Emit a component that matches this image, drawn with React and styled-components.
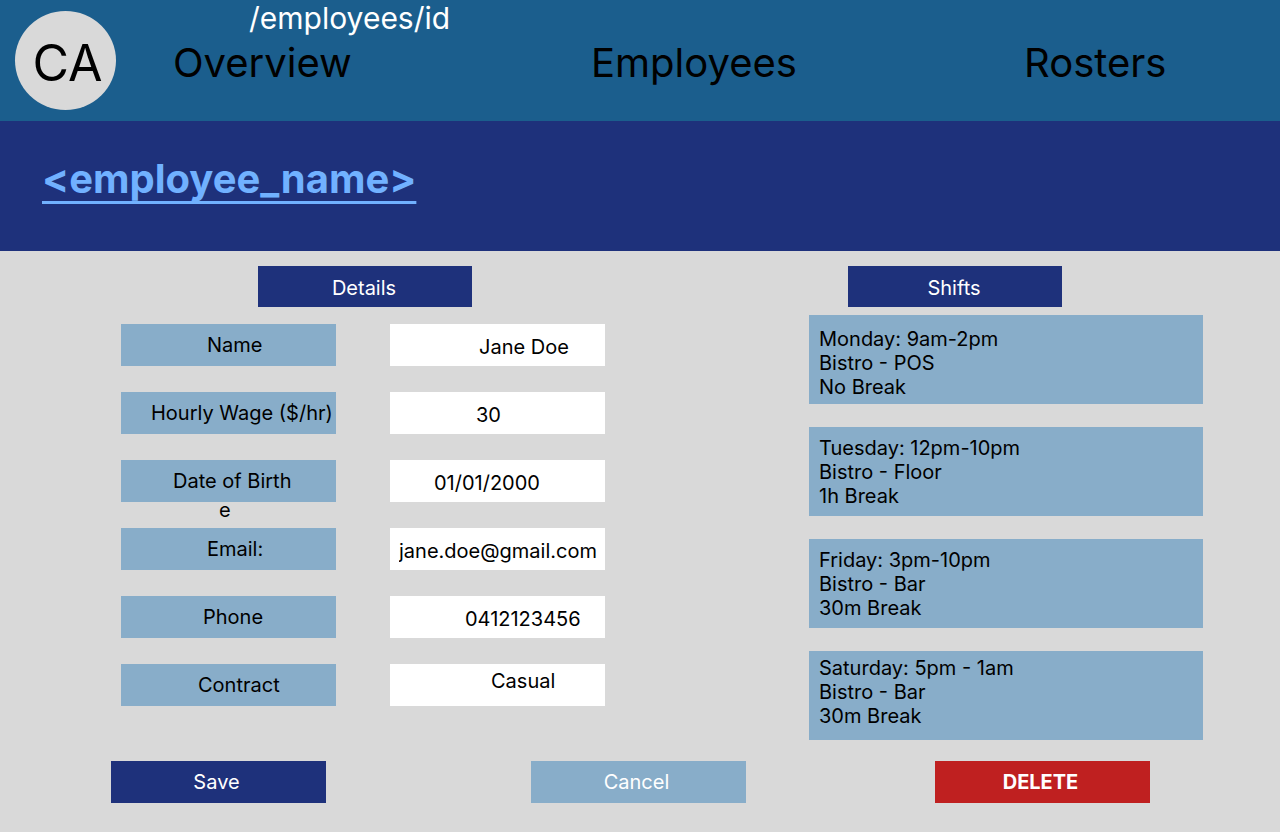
import React from "react";
import styled, { createGlobalStyle } from "styled-components";

const color = {
  header: "#1b5e8d",
  navy: "#1e317b",
  steel: "#88adc9",
  grey: "#d9d9d9",
  link: "#71b1ff",
  danger: "#bf2020",
};

const GlobalStyle = createGlobalStyle`
  *, *::before, *::after { box-sizing: border-box; }
  body {
    margin: 0;
    background: ${color.grey};
    color: #000;
    font-family: Inter, "Liberation Sans", sans-serif;
    font-size: 20px;
    line-height: 24px;
  }
`;

const Header = styled.header`
  display: flex;
  height: 121px;
  background: ${color.header};
`;

const Avatar = styled.a`
  display: flex;
  flex: none;
  align-items: center;
  justify-content: center;
  width: 101px;
  height: 99px;
  margin: 11px 0 0 15px;
  padding: 4px 0 0 4px;
  border-radius: 50%;
  background: ${color.grey};
  color: #000;
  font-size: 50px;
  line-height: 60px;
  text-decoration: none;
`;

const HeaderMain = styled.div`
  flex: 1;
  padding-left: 57px;
`;

const RoutePath = styled.div`
  padding-left: 76px;
  color: #fff;
  font-size: 30px;
  line-height: 36px;
`;

const Nav = styled.nav`
  display: grid;
  grid-template-columns: 418fr 433fr 256fr;
  justify-items: start;
  margin-top: 3px;
`;

const NavLink = styled.a`
  color: #000;
  font-size: 40px;
  line-height: 48px;
  text-decoration: none;
`;

const Banner = styled.section`
  height: 130px;
  padding: 34px 42px;
  background: ${color.navy};
`;

const EmployeeName = styled.h1`
  margin: 0;
  color: ${color.link};
  font-size: 40px;
  line-height: 48px;
  font-weight: 700;
  text-decoration: underline;
  text-decoration-thickness: 3px;
  text-underline-offset: 8px;
  text-decoration-skip-ink: none;
`;

const Form = styled.form`
  padding-bottom: 29px;
`;

const Columns = styled.div`
  display: grid;
  grid-template-columns: 484fr 394fr;
  column-gap: 204px;
  padding: 15px 77px 0 121px;
`;

const SectionTitle = styled.h2`
  width: 214px;
  margin: 0 0 ${(p) => p.$space}px ${(p) => p.$inset}px;
  padding: 10px 2px 7px 0;
  background: ${color.navy};
  color: #fff;
  font-size: 20px;
  line-height: 24px;
  font-weight: 400;
  text-align: center;
`;

const FieldList = styled.div`
  display: grid;
  row-gap: 26px;
`;

const Field = styled.div`
  position: relative;
  display: grid;
  grid-template-columns: 1fr 1fr;
  column-gap: 54px;
`;

const FieldLabel = styled.label`
  height: 42px;
  padding: 9px 0 9px ${(p) => p.$inset}px;
  background: ${color.steel};
  white-space: nowrap;
`;

const FieldInput = styled.input`
  width: 100%;
  min-width: 0;
  height: 42px;
  padding: ${(p) => (p.$raised ? "0 0 8px" : "3px 0 0")};
  padding-left: ${(p) => p.$inset}px;
  border: 0;
  border-radius: 0;
  background: #fff;
  color: #000;
  font: inherit;
`;

const FieldNote = styled.span`
  position: absolute;
  top: 38px;
  left: 98px;
`;

const ShiftList = styled.ul`
  display: grid;
  row-gap: 23px;
  margin: 0;
  padding: 0;
  list-style: none;
`;

const ShiftCard = styled.li`
  display: flex;
  flex-direction: column;
  justify-content: ${(p) => p.$align};
  height: 89px;
  padding: 5px 10px;
  background: ${color.steel};
`;

const Actions = styled.div`
  display: grid;
  grid-template-columns: 420fr 404fr 345fr;
  justify-items: start;
  margin-top: 21px;
  padding-left: 111px;
`;

const ActionButton = styled.button`
  width: 215px;
  height: 42px;
  padding: 0 4px 0 0;
  border: 0;
  background: ${(p) => p.$tone};
  color: #fff;
  font: inherit;
  font-weight: ${(p) => (p.$strong ? 700 : 400)};
  cursor: pointer;
`;

const fields = [
  { id: "name", label: "Name", labelInset: 86, value: "Jane Doe", inset: 89 },
  { id: "wage", label: "Hourly Wage ($/hr)", labelInset: 30, value: "30", inset: 86 },
  { id: "dob", label: "Date of Birth", labelInset: 52, value: "01/01/2000", inset: 44, note: "e" },
  { id: "email", label: "Email:", labelInset: 86, value: "jane.doe@gmail.com", inset: 9 },
  { id: "phone", label: "Phone", labelInset: 82, value: "0412123456", inset: 75 },
  { id: "contract", label: "Contract", labelInset: 77, value: "Casual", inset: 101, raised: true },
];

const shifts = [
  { time: "Monday: 9am-2pm", place: "Bistro - POS", rest: "No Break", align: "flex-end" },
  { time: "Tuesday: 12pm-10pm", place: "Bistro - Floor", rest: "1h Break", align: "center" },
  { time: "Friday: 3pm-10pm", place: "Bistro - Bar", rest: "30m Break", align: "center" },
  { time: "Saturday: 5pm - 1am", place: "Bistro - Bar", rest: "30m Break", align: "flex-start" },
];

export default function App() {
  return (
    <>
      <GlobalStyle />
      <Header>
        <Avatar href="#account">CA</Avatar>
        <HeaderMain>
          <RoutePath>/employees/id</RoutePath>
          <Nav>
            <NavLink href="#overview">Overview</NavLink>
            <NavLink href="#employees">Employees</NavLink>
            <NavLink href="#rosters">Rosters</NavLink>
          </Nav>
        </HeaderMain>
      </Header>
      <main>
        <Banner>
          <EmployeeName>&lt;employee_name&gt;</EmployeeName>
        </Banner>
        <Form onSubmit={(event) => event.preventDefault()}>
          <Columns>
            <section>
              <SectionTitle $inset={137} $space={17}>Details</SectionTitle>
              <FieldList>
                {fields.map((f) => (
                  <Field key={f.id}>
                    <FieldLabel htmlFor={f.id} $inset={f.labelInset}>{f.label}</FieldLabel>
                    <FieldInput
                      id={f.id}
                      type="text"
                      defaultValue={f.value}
                      $inset={f.inset}
                      $raised={f.raised}
                    />
                    {f.note && <FieldNote>{f.note}</FieldNote>}
                  </Field>
                ))}
              </FieldList>
            </section>
            <section>
              <SectionTitle $inset={39} $space={8}>Shifts</SectionTitle>
              <ShiftList>
                {shifts.map((s) => (
                  <ShiftCard key={s.time} $align={s.align}>
                    <span>{s.time}</span>
                    <span>{s.place}</span>
                    <span>{s.rest}</span>
                  </ShiftCard>
                ))}
              </ShiftList>
            </section>
          </Columns>
          <Actions>
            <ActionButton type="submit" $tone={color.navy}>Save</ActionButton>
            <ActionButton type="button" $tone={color.steel}>Cancel</ActionButton>
            <ActionButton type="button" $tone={color.danger} $strong>DELETE</ActionButton>
          </Actions>
        </Form>
      </main>
    </>
  );
}
